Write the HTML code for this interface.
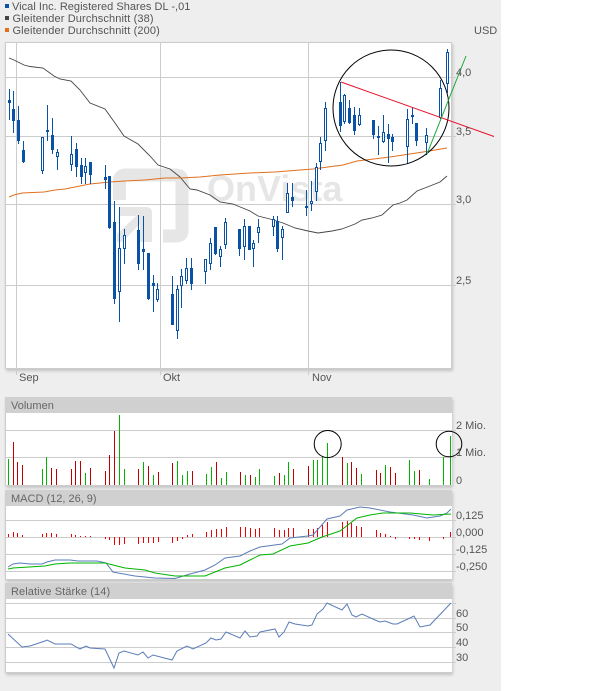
<!DOCTYPE html>
<html><head><meta charset="utf-8"><style>
html,body{margin:0;padding:0;background:#fff;width:614px;height:691px;overflow:hidden}
#bg{position:absolute;left:0;top:0;width:501px;height:691px;background:#eee}
.p{position:absolute;background:#fff;box-shadow:1px 2px 3px rgba(0,0,0,.18)}
svg{position:absolute;left:0;top:0}
text{font-family:"Liberation Sans",sans-serif;font-size:11px;fill:#555}
.h{fill:#666}
.l{letter-spacing:.13px}
</style></head><body>
<div id="bg"></div>
<div class="p" style="left:5px;top:42px;width:447px;height:327px"></div>
<div class="p" style="left:5px;top:397px;width:447px;height:89px"></div>
<div class="p" style="left:5px;top:490px;width:447px;height:90px"></div>
<div class="p" style="left:5px;top:583px;width:447px;height:90px"></div>
<svg width="614" height="691" viewBox="0 0 614 691" xmlns="http://www.w3.org/2000/svg">
<!-- legend -->
<rect x="5" y="4" width="4" height="4" fill="#0a52a5"/>
<rect x="5" y="16" width="4" height="4" fill="#444"/>
<rect x="5" y="28" width="4" height="4" fill="#e0701f"/>
<text x="12" y="10" style="letter-spacing:.03px">Vical Inc. Registered Shares DL -,01</text>
<text class="l" x="12.5" y="22">Gleitender Durchschnitt (38)</text>
<text class="l" x="12.5" y="34">Gleitender Durchschnitt (200)</text>
<text x="474" y="34">USD</text>
<!-- watermark -->
<g fill="none" stroke="#e6e6e6" stroke-width="13">
<path d="M119.5 200V181q0-6 6-6H176q6 0 6 6V231q0 5-6 5H163"/>
</g>
<path fill="#e6e6e6" d="M120 207H146q6 0 6 6V242H140V224L122 242H117V234L136 216H120Z"/>
<text x="207" y="201" style="font-size:36px;font-weight:bold;fill:#e6e6e6">OnVista</text>
<!-- main frame and grid -->
<g shape-rendering="crispEdges" stroke="#ccc" fill="none">
<path d="M5.5 42.5H451.5V368.5H5.5Z"/>
<path d="M5 77.5H456M5 136.5H456M5 204.5H456M5 285.5H456M16.5 42V375M160.5 42V375M308.5 42V375"/>
</g>
<!-- moving averages -->
<polyline fill="none" stroke="#444" stroke-width=".9" points="9,58 14,60 24,65 30,66.5 43,68 54,76 60,79 71,81 80,90 90,103 105,109 115,123 124,136 138,144 150,156 158,165 170,169 180,177 190,189 197,190 210,195 220,202 233,204 250,211 258,216 270,219 283,223 295,228 308,231 318,233 332,231 342,229 355,224 362,220 372,218 382,215 393,205 400,203 407,200 417,191 430,186 440,182 447,176"/>
<polyline fill="none" stroke="#e0701f" stroke-width="1" points="9,197 14,195 22,193 44,192 55,190 65,189 75,187 90,184 110,182 125,181 145,180 165,178 180,178 200,177 220,175 250,173 275,172 300,170 313,169 343,165 357,161 390,157 423,152 447,148"/>
<!-- wicks -->
<path shape-rendering="crispEdges" stroke="#0a52a5" stroke-width="1" fill="none" d="M9.5 89V120M13.5 91V133M18.5 106V144M23.5 141V163M42.5 137V174M47.5 105V141M52.5 118V154M57.5 149V170M71.5 136V171M76.5 143V177M81.5 158V184M85.5 158V184M90.5 162V184M105.5 165V189M109.5 176V229M114.5 201V304M119.5 207V322M124.5 229V264M138.5 215V270M143.5 216V270M148.5 253V300M153.5 275V312M157.5 283V302M172.5 276V325M177.5 285V339M181.5 269V308M186.5 258V284M191.5 258V290M205.5 259V284M210.5 238V270M215.5 227V255M220.5 246V267M225.5 218V249M239.5 229V256M244.5 219V260M249.5 226V250M253.5 240V267M258.5 219V243M273.5 216V236M277.5 216V252M282.5 226V260M287.5 183V213M292.5 183V207M306.5 190V216M311.5 181V211M316.5 163V201M320.5 137V170M325.5 102V151M340.5 82V132M344.5 94V124M349.5 100V124M354.5 107V135M359.5 108V126M373.5 120V139M378.5 126V155M383.5 115V143M388.5 124V163M392.5 134V151M407.5 109V164M412.5 107V124M416.5 123V146M426.5 128V155M440.5 80V119M447.5 49V93"/>
<!-- filled bodies -->
<path shape-rendering="crispEdges" fill="#0a52a5" d="M8 100h3v3h-3zM12 109h3v12h-3zM17 120h3v21h-3zM22 150h3v12h-3zM46 130h3v2h-3zM51 135h3v15h-3zM75 149h3v18h-3zM80 165h3v12h-3zM89 162h3v13h-3zM104 177h3v3h-3zM108 176h3v52h-3zM113 222h3v77h-3zM137 230h3v34h-3zM142 249h3v3h-3zM147 253h3v46h-3zM152 283h3v3h-3zM171 294h3v31h-3zM190 268h3v16h-3zM214 227h3v27h-3zM238 229h3v20h-3zM248 226h3v24h-3zM276 221h3v28h-3zM291 197h3v4h-3zM305 206h3v2h-3zM339 102h3v24h-3zM348 108h3v15h-3zM353 115h3v16h-3zM372 120h3v15h-3zM377 136h3v2h-3zM387 134h3v5h-3zM391 137h3v5h-3zM411 115h3v2h-3zM415 123h3v18h-3z"/>
<!-- hollow bodies -->
<path shape-rendering="crispEdges" fill="#fff" stroke="#0a52a5" stroke-width="1" d="M41.5 137.5h2v33h-2zM56.5 152.5h2v4h-2zM70.5 154.5h2v10h-2zM84.5 166.5h2v6h-2zM118.5 248.5h2v43h-2zM123.5 235.5h2v13h-2zM156.5 289.5h2v10h-2zM176.5 289.5h2v41h-2zM180.5 276.5h2v9h-2zM185.5 268.5h2v12h-2zM204.5 259.5h2v12h-2zM209.5 243.5h2v20h-2zM219.5 249.5h2v7h-2zM224.5 222.5h2v22h-2zM243.5 226.5h2v20h-2zM252.5 243.5h2v5h-2zM257.5 227.5h2v5h-2zM272.5 219.5h2v7h-2zM281.5 229.5h2v8h-2zM286.5 193.5h2v19h-2zM310.5 201.5h2v2h-2zM315.5 167.5h2v24h-2zM319.5 143.5h2v18h-2zM324.5 108.5h2v32h-2zM343.5 95.5h2v26h-2zM358.5 115.5h2v9h-2zM382.5 132.5h2v9h-2zM406.5 119.5h2v27h-2zM425.5 135.5h2v7h-2zM439.5 88.5h2v29h-2zM446.5 52.5h2v31h-2z"/>
<!-- annotations -->
<circle cx="391" cy="108" r="58" fill="none" stroke="#000" stroke-width="1"/>
<line x1="341" y1="82" x2="494" y2="136.5" stroke="#e8102a" stroke-width="1"/>
<line x1="427" y1="154" x2="466" y2="56" stroke="#1aa83c" stroke-width="1"/>
<!-- axis labels -->
<text x="456" y="76">4,0</text>
<text x="456" y="135">3,5</text>
<text x="456" y="203">3,0</text>
<text x="456" y="284">2,5</text>
<text x="19" y="381">Sep</text>
<text x="163" y="381">Okt</text>
<text x="312" y="381">Nov</text>
<!-- volume -->
<rect x="5" y="397" width="447" height="16" fill="#d0d0d0"/>
<text class="h" x="11" y="409">Volumen</text>
<path shape-rendering="crispEdges" stroke="#ccc" fill="none" d="M5 430.5H456M5 457.5H456M5 485.5H452M5.5 413V485"/>
<path shape-rendering="crispEdges" stroke="#00b400" d="M8.5 459V485M42.5 469V485M46.5 457V485M85.5 473V485M119.5 415V485M124.5 469V485M143.5 462V485M153.5 475V485M177.5 461V485M182.5 475V485M187.5 471V485M206.5 474V485M211.5 467V485M221.5 478V485M226.5 472V485M245.5 475V485M255.5 477V485M259.5 469V485M274.5 476V485M284.5 475V485M288.5 462V485M313.5 460V485M317.5 460V485M322.5 457V485M327.5 443V485M347.5 463V485M361.5 474V485M385.5 465V485M409.5 460V485M414.5 471V485M429.5 479V485M443.5 457V485M450.5 436V485"/>
<path shape-rendering="crispEdges" stroke="#c00000" d="M13.5 442V485M17.5 462V485M22.5 465V485M51.5 468V485M56.5 469V485M71.5 469V485M75.5 461V485M80.5 461V485M90.5 468V485M105.5 471V485M109.5 455V485M114.5 431V485M138.5 469V485M148.5 466V485M158.5 472V485M172.5 463V485M192.5 471V485M216.5 462V485M240.5 472V485M250.5 475V485M279.5 473V485M293.5 469V485M308.5 466V485M342.5 457V485M351.5 462V485M356.5 468V485M376.5 470V485M380.5 473V485M390.5 467V485M395.5 473V485M419.5 470V485"/>
<circle cx="327.7" cy="444" r="13.5" fill="none" stroke="#000"/>
<circle cx="449" cy="444" r="12.8" fill="none" stroke="#000"/>
<text x="456" y="429">2 Mio.</text>
<text x="456" y="456">1 Mio.</text>
<text x="456" y="484">0</text>
<!-- MACD -->
<rect x="5" y="490" width="447" height="16" fill="#d0d0d0"/>
<text class="h" x="11" y="502">MACD (12, 26, 9)</text>
<path shape-rendering="crispEdges" stroke="#ccc" fill="none" d="M5 520.5H456M5 537.5H456M5 554.5H456M5 571.5H456M5 579.5H452M5.5 506V579"/>
<path shape-rendering="crispEdges" stroke="#f00000" d="M8.5 534V537M13.5 532V537M17.5 533V537M22.5 535V537M42.5 534V537M46.5 533V537M51.5 533V537M56.5 534V537M71.5 534V537M75.5 535V537M80.5 536V537M85.5 536V537M90.5 536V537M105.5 537V539M109.5 537V540M114.5 537V545M119.5 537V545M124.5 537V544M138.5 537V544M143.5 537V543M148.5 537V543M153.5 537V543M158.5 537V542M172.5 537V543M177.5 537V541M182.5 537V539M187.5 535V537M192.5 534V537M206.5 532V537M211.5 530V537M216.5 529V537M221.5 529V537M226.5 527V537M240.5 527V537M245.5 527V537M250.5 528V537M255.5 529V537M259.5 528V537M274.5 528V537M279.5 530V537M284.5 530V537M288.5 528V537M293.5 528V537M308.5 529V537M313.5 529V537M317.5 528V537M322.5 525V537M327.5 522V537M342.5 522V537M347.5 521V537M351.5 523V537M356.5 526V537M361.5 527V537M376.5 530V537M380.5 533V537M385.5 534V537M390.5 536V537M395.5 537V539M409.5 537V539M414.5 537V539M419.5 537V540M429.5 537V541M443.5 537V539M450.5 532V537"/>
<polyline fill="none" stroke="#5a7db8" stroke-width="1" points="8,567 13,564 20,563 30,564 42,564 47,562 55,560 70,560 78,561 83,561 97,561 106,563 113,572 118,573 135,576 155,578 175,578.5 190,574 205,570 215,565 225,558 240,556 250,551 260,547 282,544 290,538 308,536 313,535 327,519 340,516 347,510 360,507 370,508 390,512 413,515 427,518 440,516 447,513 451,509"/>
<polyline fill="none" stroke="#00b400" stroke-width="1" points="8,569 13,568 45,566 55,564 70,563 105,563 113,565 125,568 145,570 155,573 175,576 205,576 215,572 225,568 240,565 250,560 260,555 273,554 290,546 308,543 322,537 340,531 357,518 370,515 383,513 410,513 433,515 451,514"/>
<text x="456" y="519">0,125</text>
<text x="456" y="536">0,000</text>
<text x="456" y="553">-0,125</text>
<text x="456" y="570">-0,250</text>
<!-- RSI -->
<rect x="5" y="583" width="447" height="16" fill="#d0d0d0"/>
<text class="h" x="11" y="595" style="letter-spacing:.1px">Relative Stärke (14)</text>
<path shape-rendering="crispEdges" stroke="#ccc" fill="none" d="M5 603.5H456M5 618.5H456M5 632.5H456M5 647.5H456M5 662.5H456M5 672.5H452M5.5 599V672"/>
<polyline fill="none" stroke="#5a7db8" stroke-width="1" points="8,634 22,647 30,646 45,641 47,640 55,644 71,644 80,649 86,646 90,648 105,649 114,668 119,653 124,651 138,655 143,652 148,658 153,655 172,660 177,651 187,646 193,649 206,643 211,638 216,640 221,639 226,632 240,638 245,631 250,637 257,636 260,632 275,629 279,637 284,632 289,622 295,624 308,626 312,625 317,614 323,609 327,603 342,610 347,604 352,615 356,617 362,614 375,620 380,622 385,621 393,624 397,624 410,618 414,616 420,627 430,625 451,603"/>
<text x="456" y="617">60</text>
<text x="456" y="631">50</text>
<text x="456" y="646">40</text>
<text x="456" y="661">30</text>
</svg>
</body></html>
